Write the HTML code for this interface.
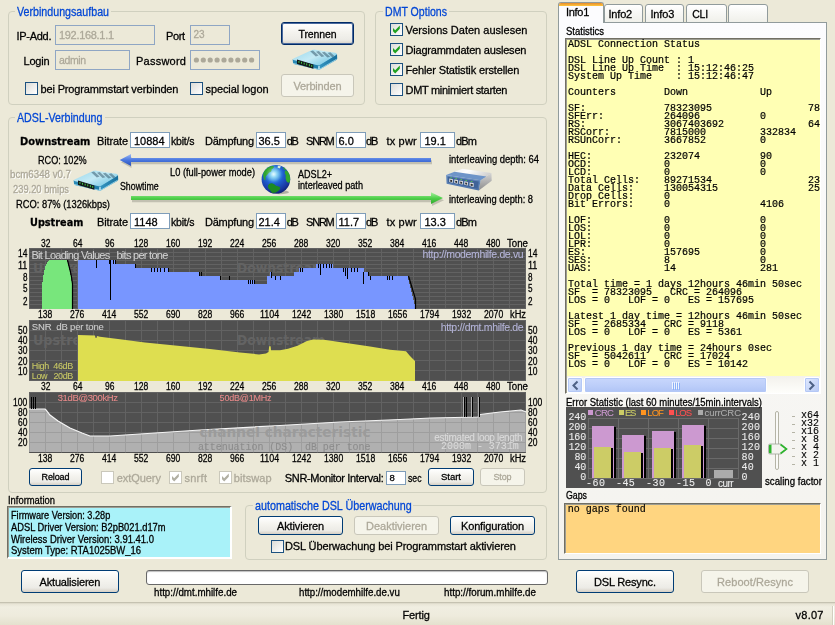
<!DOCTYPE html>
<html lang="de">
<head>
<meta charset="utf-8">
<title>DMT</title>
<style>
html,body{margin:0;padding:0;}
body{width:835px;height:625px;overflow:hidden;background:#ECE9D8;}
#app{position:relative;width:835px;height:625px;overflow:hidden;background:#ECE9D8;font-family:"Liberation Sans",sans-serif;}
#txt{position:absolute;left:0;top:0;width:835px;height:625px;will-change:transform;}
.t{position:absolute;white-space:pre;-webkit-text-stroke:0.28px;}
.a{position:absolute;box-sizing:border-box;}
.grp{position:absolute;box-sizing:border-box;border:1px solid #D0D0BF;border-radius:4px;}
.inp{position:absolute;box-sizing:border-box;border:1px solid #7F9DB9;background:#fff;}
.inp.dis{background:#ECE9D8;border-color:#8FA6C4;}
.btn{position:absolute;box-sizing:border-box;border:1px solid #003C74;border-radius:3px;background:linear-gradient(#FFFFFF 0%,#F4F3EE 45%,#ECEBE6 80%,#D6D0C5 100%);}
.btn.def{border-color:#002A66;box-shadow:inset 0 0 0 1px #4A6A9E;}
.btn.dis{border-color:#C9C7BA;background:#F5F4EA;}
.cb{position:absolute;box-sizing:border-box;width:13px;height:13px;border:1px solid #1C5180;background:linear-gradient(135deg,#DCDCD7,#FFFFFF);}
.cb.dis{border-color:#CAC8BB;background:#fff;}
.bg{position:absolute;background:#ECE9D8;}
</style>
</head>
<body>
<div id="app">
<div class="grp" style="left:8px;top:11px;width:357px;height:94px"></div>
<div class="bg" style="left:15px;top:9px;width:96px;height:5px"></div>
<div class="inp dis" style="left:55px;top:25px;width:100px;height:20px"></div>
<div class="inp dis" style="left:190px;top:25px;width:40px;height:20px"></div>
<div class="inp dis" style="left:55px;top:50px;width:75px;height:20px"></div>
<div class="inp dis" style="left:190px;top:50px;width:70px;height:20px"></div>
<svg class="a" style="left:192px;top:56px" width="66" height="8"><circle cx="4.4" cy="4" r="2.6" fill="#ACA899"/><circle cx="11.3" cy="4" r="2.6" fill="#ACA899"/><circle cx="18.2" cy="4" r="2.6" fill="#ACA899"/><circle cx="25.1" cy="4" r="2.6" fill="#ACA899"/><circle cx="32.0" cy="4" r="2.6" fill="#ACA899"/><circle cx="38.9" cy="4" r="2.6" fill="#ACA899"/><circle cx="45.8" cy="4" r="2.6" fill="#ACA899"/><circle cx="52.7" cy="4" r="2.6" fill="#ACA899"/><circle cx="59.6" cy="4" r="2.6" fill="#ACA899"/></svg>
<div class="cb " style="left:25px;top:82px"></div>
<div class="cb " style="left:190px;top:82px"></div>
<div class="btn def" style="left:281px;top:22px;width:73px;height:23px"></div>
<div class="btn dis" style="left:281px;top:74px;width:73px;height:23px"></div>
<div class="grp" style="left:375px;top:11px;width:172px;height:94px"></div>
<div class="bg" style="left:382.5px;top:9px;width:66px;height:5px"></div>
<div class="cb " style="left:390px;top:23px"><svg width="11" height="11" viewBox="0 0 11 11" style="position:absolute;left:0;top:0"><path d="M2 4 L4.2 6.2 L8.8 1.6 L8.8 4.8 L4.2 9.4 L2 7.2 Z" fill="#21A121"/></svg></div>
<div class="cb " style="left:390px;top:43px"><svg width="11" height="11" viewBox="0 0 11 11" style="position:absolute;left:0;top:0"><path d="M2 4 L4.2 6.2 L8.8 1.6 L8.8 4.8 L4.2 9.4 L2 7.2 Z" fill="#21A121"/></svg></div>
<div class="cb " style="left:390px;top:63px"><svg width="11" height="11" viewBox="0 0 11 11" style="position:absolute;left:0;top:0"><path d="M2 4 L4.2 6.2 L8.8 1.6 L8.8 4.8 L4.2 9.4 L2 7.2 Z" fill="#21A121"/></svg></div>
<div class="cb " style="left:390px;top:83px"></div>
<div class="grp" style="left:8px;top:117px;width:539px;height:376px"></div>
<div class="bg" style="left:15px;top:115px;width:89.5px;height:5px"></div>
<div class="inp " style="left:130px;top:132px;width:40px;height:16px"></div>
<div class="inp " style="left:256px;top:132px;width:30px;height:16px"></div>
<div class="inp " style="left:335.5px;top:132px;width:30px;height:16px"></div>
<div class="inp " style="left:420px;top:132px;width:35px;height:16px"></div>
<div class="inp " style="left:130px;top:213px;width:40px;height:16px"></div>
<div class="inp " style="left:256px;top:213px;width:30px;height:16px"></div>
<div class="inp " style="left:335.5px;top:213px;width:30px;height:16px"></div>
<div class="inp " style="left:420px;top:213px;width:35px;height:16px"></div>
<svg class="a" style="left:115px;top:150px" width="335" height="56" viewBox="115 150 335 56">
<defs>
<linearGradient id="gb" x1="0" y1="0" x2="0" y2="1"><stop offset="0" stop-color="#9DB8F2"/><stop offset="0.5" stop-color="#4A78E0"/><stop offset="1" stop-color="#2A50B8"/></linearGradient>
<linearGradient id="gg" x1="0" y1="0" x2="0" y2="1"><stop offset="0" stop-color="#A8F0A0"/><stop offset="0.5" stop-color="#4FD04A"/><stop offset="1" stop-color="#2FA82C"/></linearGradient>
</defs>
<g opacity="0.28" fill="#5A5A50"><path d="M121 162.3 L131.5 157 L131.5 160.3 L432 160.3 L432 164.3 L131.5 164.3 L131.5 168 Z"/><path d="M132 198.2 L432 198.2 L432 195 L444 200.2 L432 206 L432 202.2 L132 202.2 Z"/></g>
<path d="M119.7 160 L131 154 L131 158 L431 158 L431 162 L131 162 L131 166 Z" fill="url(#gb)"/>
<path d="M131 196 L431 196 L431 192.3 L443 198 L431 204 L431 200 L131 200 Z" fill="url(#gg)"/>
</svg>
<svg class="a" style="left:0;top:240px" width="560" height="75" viewBox="0 240 560 75" shape-rendering="crispEdges"><rect x="29" y="248" width="497" height="61" fill="#505050"/><rect x="29" y="248" width="1" height="61" fill="#626262"/><rect x="45" y="248" width="1" height="61" fill="#626262"/><rect x="61" y="248" width="1" height="61" fill="#626262"/><rect x="77" y="248" width="1" height="61" fill="#626262"/><rect x="93" y="248" width="1" height="61" fill="#626262"/><rect x="109" y="248" width="1" height="61" fill="#626262"/><rect x="125" y="248" width="1" height="61" fill="#626262"/><rect x="141" y="248" width="1" height="61" fill="#626262"/><rect x="157" y="248" width="1" height="61" fill="#626262"/><rect x="173" y="248" width="1" height="61" fill="#626262"/><rect x="189" y="248" width="1" height="61" fill="#626262"/><rect x="205" y="248" width="1" height="61" fill="#626262"/><rect x="221" y="248" width="1" height="61" fill="#626262"/><rect x="237" y="248" width="1" height="61" fill="#626262"/><rect x="253" y="248" width="1" height="61" fill="#626262"/><rect x="269" y="248" width="1" height="61" fill="#626262"/><rect x="285" y="248" width="1" height="61" fill="#626262"/><rect x="301" y="248" width="1" height="61" fill="#626262"/><rect x="317" y="248" width="1" height="61" fill="#626262"/><rect x="333" y="248" width="1" height="61" fill="#626262"/><rect x="349" y="248" width="1" height="61" fill="#626262"/><rect x="365" y="248" width="1" height="61" fill="#626262"/><rect x="381" y="248" width="1" height="61" fill="#626262"/><rect x="397" y="248" width="1" height="61" fill="#626262"/><rect x="413" y="248" width="1" height="61" fill="#626262"/><rect x="429" y="248" width="1" height="61" fill="#626262"/><rect x="445" y="248" width="1" height="61" fill="#626262"/><rect x="461" y="248" width="1" height="61" fill="#626262"/><rect x="477" y="248" width="1" height="61" fill="#626262"/><rect x="493" y="248" width="1" height="61" fill="#626262"/><rect x="509" y="248" width="1" height="61" fill="#626262"/><rect x="525" y="248" width="1" height="61" fill="#626262"/><rect x="29" y="248" width="496" height="1" fill="#626262"/><rect x="29" y="252" width="496" height="1" fill="#626262"/><rect x="29" y="256" width="496" height="1" fill="#626262"/><rect x="29" y="260" width="496" height="1" fill="#626262"/><rect x="29" y="264" width="496" height="1" fill="#626262"/><rect x="29" y="268" width="496" height="1" fill="#626262"/><rect x="29" y="272" width="496" height="1" fill="#626262"/><rect x="29" y="276" width="496" height="1" fill="#626262"/><rect x="29" y="280" width="496" height="1" fill="#626262"/><rect x="29" y="284" width="496" height="1" fill="#626262"/><rect x="29" y="288" width="496" height="1" fill="#626262"/><rect x="29" y="292" width="496" height="1" fill="#626262"/><rect x="29" y="296" width="496" height="1" fill="#626262"/><rect x="29" y="300" width="496" height="1" fill="#626262"/><rect x="29" y="304" width="496" height="1" fill="#626262"/><rect x="29" y="308" width="496" height="1" fill="#626262"/><text x="33" y="273" font-family="DejaVu Sans, sans-serif" font-weight="bold" font-size="14.5" fill="#636363" textLength="70" lengthAdjust="spacingAndGlyphs" shape-rendering="auto">Upstream</text><text x="237" y="273" font-family="DejaVu Sans, sans-serif" font-weight="bold" font-size="14.5" fill="#636363" textLength="88" lengthAdjust="spacingAndGlyphs" shape-rendering="auto">Downstream</text><path d="M42 309 L42 286 L43 278 L44 272 L45 268 L46 265 L47 263 L48 261 L49 260 L67 260 L68 264 L69 268 L70 272 L71 277 L72 284 L73 309 Z" fill="#78E67C"/><path d="M67.5 260 L68.5 264 L69.5 268 L70.5 272 L71.5 277 L72.5 284 L72.5 309" fill="none" stroke="#000" stroke-width="1.2" shape-rendering="auto"/><path d="M78 309 L78 260 L116 260 L116 264 L136 264 L136 268 L169 268 L169 272 L200 272 L200 276 L221 276 L221 280 L255 280 L255 284 L267 284 L267 276 L270 276 L270 272 L272 272 L272 276 L294 276 L294 272 L299 272 L299 268 L316 268 L316 264 L333 264 L333 268 L364 268 L364 272 L369 272 L369 276 L408 276 L408 280 L409 280 L409 284 L410 284 L410 288 L411 288 L411 292 L412 292 L412 296 L413 296 L413 300 L414 300 L414 304 L416 304 L416 309 Z" fill="#7896FF"/><rect x="96" y="260" width="1" height="8" fill="#000"/><rect x="109" y="260" width="1" height="4" fill="#000"/><rect x="110" y="260" width="1" height="40" fill="#000"/><rect x="113" y="260" width="1" height="4" fill="#000"/><rect x="115" y="260" width="1" height="4" fill="#000"/><rect x="135" y="264" width="1" height="4" fill="#000"/><rect x="151" y="268" width="1" height="4" fill="#000"/><rect x="154" y="268" width="1" height="4" fill="#000"/><rect x="157" y="268" width="1" height="4" fill="#000"/><rect x="160" y="268" width="1" height="4" fill="#000"/><rect x="164" y="268" width="1" height="4" fill="#000"/><rect x="168" y="268" width="1" height="4" fill="#000"/><rect x="199" y="272" width="1" height="4" fill="#000"/><rect x="201" y="272" width="1" height="4" fill="#000"/><rect x="220" y="276" width="1" height="4" fill="#000"/><rect x="229" y="276" width="1" height="4" fill="#000"/><rect x="248" y="280" width="1" height="4" fill="#000"/><rect x="250" y="280" width="1" height="4" fill="#000"/><rect x="252" y="280" width="1" height="4" fill="#000"/><rect x="254" y="280" width="1" height="4" fill="#000"/><rect x="271" y="272" width="1" height="6" fill="#000"/><rect x="275" y="276" width="1" height="4" fill="#000"/><rect x="280" y="276" width="1" height="4" fill="#000"/><rect x="300" y="268" width="1" height="4" fill="#000"/><rect x="302" y="268" width="1" height="4" fill="#000"/><rect x="318" y="264" width="1" height="4" fill="#000"/><rect x="320" y="264" width="1" height="11" fill="#000"/><rect x="323" y="264" width="1" height="4" fill="#000"/><rect x="326" y="264" width="1" height="4" fill="#000"/><rect x="329" y="264" width="1" height="4" fill="#000"/><rect x="331" y="264" width="1" height="4" fill="#000"/><rect x="343" y="268" width="1" height="4" fill="#000"/><rect x="345" y="268" width="1" height="8" fill="#000"/><rect x="347" y="268" width="1" height="11" fill="#000"/><rect x="351" y="268" width="1" height="4" fill="#000"/><rect x="354" y="268" width="1" height="4" fill="#000"/><rect x="357" y="268" width="1" height="4" fill="#000"/><rect x="363" y="272" width="1" height="12" fill="#000"/><rect x="368" y="272" width="1" height="4" fill="#000"/><rect x="370" y="276" width="1" height="4" fill="#000"/><rect x="387" y="276" width="1" height="4" fill="#000"/><rect x="389" y="276" width="1" height="4" fill="#000"/><rect x="392" y="276" width="1" height="4" fill="#000"/><path d="M408.5 276 L415.5 299 L415.5 309" fill="none" stroke="#000" stroke-width="1.2" shape-rendering="auto"/></svg>
<svg class="a" style="left:0;top:316px" width="560" height="70" viewBox="0 316 560 70" shape-rendering="crispEdges"><rect x="29" y="320" width="497" height="61" fill="#505050"/><rect x="29" y="320" width="1" height="61" fill="#626262"/><rect x="45" y="320" width="1" height="61" fill="#626262"/><rect x="61" y="320" width="1" height="61" fill="#626262"/><rect x="77" y="320" width="1" height="61" fill="#626262"/><rect x="93" y="320" width="1" height="61" fill="#626262"/><rect x="109" y="320" width="1" height="61" fill="#626262"/><rect x="125" y="320" width="1" height="61" fill="#626262"/><rect x="141" y="320" width="1" height="61" fill="#626262"/><rect x="157" y="320" width="1" height="61" fill="#626262"/><rect x="173" y="320" width="1" height="61" fill="#626262"/><rect x="189" y="320" width="1" height="61" fill="#626262"/><rect x="205" y="320" width="1" height="61" fill="#626262"/><rect x="221" y="320" width="1" height="61" fill="#626262"/><rect x="237" y="320" width="1" height="61" fill="#626262"/><rect x="253" y="320" width="1" height="61" fill="#626262"/><rect x="269" y="320" width="1" height="61" fill="#626262"/><rect x="285" y="320" width="1" height="61" fill="#626262"/><rect x="301" y="320" width="1" height="61" fill="#626262"/><rect x="317" y="320" width="1" height="61" fill="#626262"/><rect x="333" y="320" width="1" height="61" fill="#626262"/><rect x="349" y="320" width="1" height="61" fill="#626262"/><rect x="365" y="320" width="1" height="61" fill="#626262"/><rect x="381" y="320" width="1" height="61" fill="#626262"/><rect x="397" y="320" width="1" height="61" fill="#626262"/><rect x="413" y="320" width="1" height="61" fill="#626262"/><rect x="429" y="320" width="1" height="61" fill="#626262"/><rect x="445" y="320" width="1" height="61" fill="#626262"/><rect x="461" y="320" width="1" height="61" fill="#626262"/><rect x="477" y="320" width="1" height="61" fill="#626262"/><rect x="493" y="320" width="1" height="61" fill="#626262"/><rect x="509" y="320" width="1" height="61" fill="#626262"/><rect x="525" y="320" width="1" height="61" fill="#626262"/><rect x="29" y="320" width="496" height="1" fill="#626262"/><rect x="29" y="330" width="496" height="1" fill="#626262"/><rect x="29" y="340" width="496" height="1" fill="#626262"/><rect x="29" y="350" width="496" height="1" fill="#626262"/><rect x="29" y="360" width="496" height="1" fill="#626262"/><rect x="29" y="370" width="496" height="1" fill="#626262"/><rect x="29" y="380" width="496" height="1" fill="#626262"/><text x="33" y="345" font-family="DejaVu Sans, sans-serif" font-weight="bold" font-size="14.5" fill="#636363" textLength="70" lengthAdjust="spacingAndGlyphs" shape-rendering="auto">Upstream</text><text x="237" y="345" font-family="DejaVu Sans, sans-serif" font-weight="bold" font-size="14.5" fill="#636363" textLength="88" lengthAdjust="spacingAndGlyphs" shape-rendering="auto">Downstream</text><path d="M78 381 L78 335 L95 335.5 L95.5 338 L96.5 338 L97 336 L100 336.8 L120 339.3 L145 342.4 L180 346 L210 349 L240 352.5 L259 354.4 L266 353.5 L268.5 352 L269.2 346.3 L270.6 346.3 L271 350.3 L280 350.3 L288 348.7 L297.5 345.8 L307 341 L313 339.6 L324 339.8 L348 343.2 L370 346.5 L390 349.8 L406 351.3 L410 356 L415 361 L415 381 Z" fill="#DEDE50" shape-rendering="auto"/></svg>
<svg class="a" style="left:0;top:388px" width="560" height="68" viewBox="0 388 560 68" shape-rendering="crispEdges"><rect x="29" y="392" width="497" height="61" fill="#505050"/><rect x="29" y="392" width="1" height="61" fill="#626262"/><rect x="45" y="392" width="1" height="61" fill="#626262"/><rect x="61" y="392" width="1" height="61" fill="#626262"/><rect x="77" y="392" width="1" height="61" fill="#626262"/><rect x="93" y="392" width="1" height="61" fill="#626262"/><rect x="109" y="392" width="1" height="61" fill="#626262"/><rect x="125" y="392" width="1" height="61" fill="#626262"/><rect x="141" y="392" width="1" height="61" fill="#626262"/><rect x="157" y="392" width="1" height="61" fill="#626262"/><rect x="173" y="392" width="1" height="61" fill="#626262"/><rect x="189" y="392" width="1" height="61" fill="#626262"/><rect x="205" y="392" width="1" height="61" fill="#626262"/><rect x="221" y="392" width="1" height="61" fill="#626262"/><rect x="237" y="392" width="1" height="61" fill="#626262"/><rect x="253" y="392" width="1" height="61" fill="#626262"/><rect x="269" y="392" width="1" height="61" fill="#626262"/><rect x="285" y="392" width="1" height="61" fill="#626262"/><rect x="301" y="392" width="1" height="61" fill="#626262"/><rect x="317" y="392" width="1" height="61" fill="#626262"/><rect x="333" y="392" width="1" height="61" fill="#626262"/><rect x="349" y="392" width="1" height="61" fill="#626262"/><rect x="365" y="392" width="1" height="61" fill="#626262"/><rect x="381" y="392" width="1" height="61" fill="#626262"/><rect x="397" y="392" width="1" height="61" fill="#626262"/><rect x="413" y="392" width="1" height="61" fill="#626262"/><rect x="429" y="392" width="1" height="61" fill="#626262"/><rect x="445" y="392" width="1" height="61" fill="#626262"/><rect x="461" y="392" width="1" height="61" fill="#626262"/><rect x="477" y="392" width="1" height="61" fill="#626262"/><rect x="493" y="392" width="1" height="61" fill="#626262"/><rect x="509" y="392" width="1" height="61" fill="#626262"/><rect x="525" y="392" width="1" height="61" fill="#626262"/><rect x="29" y="392" width="496" height="1" fill="#626262"/><rect x="29" y="402" width="496" height="1" fill="#626262"/><rect x="29" y="412" width="496" height="1" fill="#626262"/><rect x="29" y="422" width="496" height="1" fill="#626262"/><rect x="29" y="432" width="496" height="1" fill="#626262"/><rect x="29" y="442" width="496" height="1" fill="#626262"/><clipPath id="c3c"><path d="M29 452 L29 409 L45 409 L46 410 L50 415 L58 421 L70 428 L82 433 L90 436 L110 436 L140 434 L200 430 L280 425.5 L340 422 L400 419.5 L431 418 L478 417 L480 414.5 L500 412 L521 410 L525 411.5 L526 412 L526 452 Z"/></clipPath><path d="M29 452 L29 409 L45 409 L46 410 L50 415 L58 421 L70 428 L82 433 L90 436 L110 436 L140 434 L200 430 L280 425.5 L340 422 L400 419.5 L431 418 L478 417 L480 414.5 L500 412 L521 410 L525 411.5 L526 412 L526 452 Z" fill="#B0B0B0" shape-rendering="auto"/><g clip-path="url(#c3c)"><rect x="29" y="392" width="1" height="61" fill="#9E9E9E"/><rect x="45" y="392" width="1" height="61" fill="#9E9E9E"/><rect x="61" y="392" width="1" height="61" fill="#9E9E9E"/><rect x="77" y="392" width="1" height="61" fill="#9E9E9E"/><rect x="93" y="392" width="1" height="61" fill="#9E9E9E"/><rect x="109" y="392" width="1" height="61" fill="#9E9E9E"/><rect x="125" y="392" width="1" height="61" fill="#9E9E9E"/><rect x="141" y="392" width="1" height="61" fill="#9E9E9E"/><rect x="157" y="392" width="1" height="61" fill="#9E9E9E"/><rect x="173" y="392" width="1" height="61" fill="#9E9E9E"/><rect x="189" y="392" width="1" height="61" fill="#9E9E9E"/><rect x="205" y="392" width="1" height="61" fill="#9E9E9E"/><rect x="221" y="392" width="1" height="61" fill="#9E9E9E"/><rect x="237" y="392" width="1" height="61" fill="#9E9E9E"/><rect x="253" y="392" width="1" height="61" fill="#9E9E9E"/><rect x="269" y="392" width="1" height="61" fill="#9E9E9E"/><rect x="285" y="392" width="1" height="61" fill="#9E9E9E"/><rect x="301" y="392" width="1" height="61" fill="#9E9E9E"/><rect x="317" y="392" width="1" height="61" fill="#9E9E9E"/><rect x="333" y="392" width="1" height="61" fill="#9E9E9E"/><rect x="349" y="392" width="1" height="61" fill="#9E9E9E"/><rect x="365" y="392" width="1" height="61" fill="#9E9E9E"/><rect x="381" y="392" width="1" height="61" fill="#9E9E9E"/><rect x="397" y="392" width="1" height="61" fill="#9E9E9E"/><rect x="413" y="392" width="1" height="61" fill="#9E9E9E"/><rect x="429" y="392" width="1" height="61" fill="#9E9E9E"/><rect x="445" y="392" width="1" height="61" fill="#9E9E9E"/><rect x="461" y="392" width="1" height="61" fill="#9E9E9E"/><rect x="477" y="392" width="1" height="61" fill="#9E9E9E"/><rect x="493" y="392" width="1" height="61" fill="#9E9E9E"/><rect x="509" y="392" width="1" height="61" fill="#9E9E9E"/><rect x="525" y="392" width="1" height="61" fill="#9E9E9E"/><rect x="29" y="402" width="496" height="1" fill="#9E9E9E"/><rect x="29" y="412" width="496" height="1" fill="#9E9E9E"/><rect x="29" y="422" width="496" height="1" fill="#9E9E9E"/><rect x="29" y="432" width="496" height="1" fill="#9E9E9E"/><rect x="29" y="442" width="496" height="1" fill="#9E9E9E"/></g><path d="M29 409 L45 409 L46 410 L50 415 L58 421 L70 428 L82 433 L90 436 L110 436 L140 434 L200 430 L280 425.5 L340 422 L400 419.5 L431 418 L478 417 L480 414.5 L500 412 L521 410 L525 411.5 L526 412" fill="none" stroke="#F4F4F4" stroke-width="1.2" shape-rendering="auto"/><rect x="31" y="397" width="1" height="12" fill="#000"/><rect x="33" y="397" width="1" height="12" fill="#000"/><rect x="35" y="397" width="1" height="12" fill="#000"/><rect x="464" y="397" width="1" height="20" fill="#000"/><rect x="466" y="397" width="1" height="20" fill="#000"/><rect x="472" y="397" width="1" height="20" fill="#000"/><rect x="479" y="397" width="1" height="20" fill="#000"/><rect x="463" y="397" width="1" height="20" fill="#B0B0B0"/><rect x="471" y="397" width="1" height="20" fill="#B0B0B0"/><rect x="478" y="397" width="1" height="20" fill="#B0B0B0"/><g clip-path="url(#c3c)"><text x="199.5" y="437" font-family="DejaVu Sans, sans-serif" font-weight="bold" font-size="14.5" fill="#9B9B9B" textLength="171" lengthAdjust="spacingAndGlyphs" shape-rendering="auto">channel characteristic</text></g></svg>
<div class="btn " style="left:29px;top:468px;width:53px;height:18px"></div>
<div class="cb dis" style="left:101px;top:471px"></div>
<div class="cb dis" style="left:169px;top:471px"><svg width="11" height="11" viewBox="0 0 11 11" style="position:absolute;left:0;top:0"><path d="M2 4 L4.2 6.2 L8.8 1.6 L8.8 4.8 L4.2 9.4 L2 7.2 Z" fill="#B1AFA2"/></svg></div>
<div class="cb dis" style="left:218.6px;top:471px"><svg width="11" height="11" viewBox="0 0 11 11" style="position:absolute;left:0;top:0"><path d="M2 4 L4.2 6.2 L8.8 1.6 L8.8 4.8 L4.2 9.4 L2 7.2 Z" fill="#B1AFA2"/></svg></div>
<div class="inp " style="left:386px;top:471px;width:20px;height:14px"></div>
<div class="btn " style="left:428px;top:468px;width:46px;height:18px"></div>
<div class="btn dis" style="left:480px;top:468px;width:45px;height:18px"></div>
<div class="a" style="left:7px;top:506px;width:225px;height:53px;background:#A9F2F9;border:1px solid;border-width:1px 2px 2px 1px;border-color:#716F64 #FFFFFF #FFFFFF #716F64;box-shadow:inset 1px 1px 0 #9D9D92"></div>
<div class="grp" style="left:245px;top:505px;width:302px;height:55px"></div>
<div class="bg" style="left:252.6px;top:503px;width:160.7px;height:5px"></div>
<div class="btn " style="left:258px;top:516px;width:85px;height:19px"></div>
<div class="btn dis" style="left:354px;top:516px;width:85px;height:19px"></div>
<div class="btn " style="left:450px;top:516px;width:85px;height:19px"></div>
<div class="cb " style="left:271px;top:540px"></div>
<div class="btn " style="left:21px;top:570px;width:98px;height:23px"></div>
<div class="a" style="left:146px;top:570px;width:402px;height:15px;background:#fff;border:1px solid #686868;border-radius:3px;box-shadow:inset 0 1px 1px #BEBEBE"></div>
<div class="btn " style="left:576px;top:570px;width:98px;height:23px"></div>
<div class="btn dis" style="left:701px;top:570px;width:108px;height:23px"></div>
<div class="a" style="left:0;top:602px;width:835px;height:23px;background:linear-gradient(#B5B2A0 0,#D5D2C2 1px,#E8E5D6 2px,#F0EEE1 5px,#EEEBDD 60%,#E4E1CE 100%)"></div>
<div class="a" style="left:832px;top:606px;width:1px;height:19px;background:#D2CFBF"></div><div class="a" style="left:833px;top:606px;width:1px;height:19px;background:#FFFFFF"></div>
<div class="a" style="left:558px;top:22px;width:269px;height:538px;background:linear-gradient(#FCFCFE,#F4F3EE);border:1px solid #919B9C"></div>
<div class="a" style="left:604px;top:4px;width:39px;height:19px;background:linear-gradient(#FFFFFF,#F0F0EA);border:1px solid #919B9C;border-radius:3px 3px 0 0"></div>
<div class="a" style="left:645px;top:4px;width:39px;height:19px;background:linear-gradient(#FFFFFF,#F0F0EA);border:1px solid #919B9C;border-radius:3px 3px 0 0"></div>
<div class="a" style="left:686px;top:4px;width:41px;height:19px;background:linear-gradient(#FFFFFF,#F0F0EA);border:1px solid #919B9C;border-radius:3px 3px 0 0"></div>
<div class="a" style="left:728px;top:4px;width:40px;height:19px;background:linear-gradient(#FFFFFF,#F0F0EA);border:1px solid #919B9C;border-radius:3px 3px 0 0"></div>
<div class="a" style="left:558px;top:2px;width:46px;height:21px;background:#FCFCFE;border:1px solid #919B9C;border-bottom:none;border-radius:3px 3px 0 0;overflow:hidden"><div style="height:3px;background:linear-gradient(#E68B2C,#FFC73C)"></div></div>
<div class="a" style="left:565px;top:38px;width:256px;height:356px;background:#FFFFB4;border:1px solid;border-color:#716F64 #FFFFFF #FFFFFF #716F64;box-shadow:inset 1px 1px 0 #9D9D92"></div>
<pre class="a" style="left:567.8px;top:39px;width:252px;height:336px;padding-top:2px;margin:0;overflow:hidden;will-change:transform;font:10px/8px 'Liberation Mono',monospace;color:#000;-webkit-text-stroke:0.2px;">ADSL Connection Status

DSL Line Up Count : 1
DSL Line Up Time  : 15:12:46:25
System Up Time    : 15:12:46:47

Counters        Down            Up

SF:             78323095                78
SFErr:          264096          0
RS:             3067403692              64
RSCorr:         7815000         332834
RSUnCorr:       3667852         0

HEC:            232074          90
OCD:            0               0
LCD:            0               0
Total Cells:    89271534                23
Data Cells:     130054315               25
Drop Cells:     0
Bit Errors:     0               4106

LOF:            0               0
LOS:            0               0
LOL:            0               0
LPR:            0               0
ES:             157695          0
SES:            8               0
UAS:            14              281

Total time = 1 days 12hours 46min 50sec
SF  = 78323095   CRC = 264096
LOS = 0   LOF = 0   ES = 157695

Latest 1 day time = 12hours 46min 50sec
SF  = 2685334   CRC = 9118
LOS = 0   LOF = 0   ES = 5361

Previous 1 day time = 24hours 0sec
SF  = 5042611   CRC = 17024
LOS = 0   LOF = 0   ES = 10142</pre>
<div class="a" style="left:567px;top:376px;width:253px;height:17px;background:linear-gradient(#F3F1EC,#FEFEFB)"></div>
<div class="a" style="left:567px;top:377px;width:16px;height:16px;border:1px solid #FFFFFF;border-radius:2px;background:linear-gradient(135deg,#E1EAFE,#B7CAF5);box-shadow:0 0 0 1px #B4C8F6 inset"></div>
<div class="a" style="left:804px;top:377px;width:16px;height:16px;border:1px solid #FFFFFF;border-radius:2px;background:linear-gradient(135deg,#E1EAFE,#B7CAF5);box-shadow:0 0 0 1px #B4C8F6 inset"></div>
<div class="a" style="left:584px;top:377px;width:183px;height:16px;border:1px solid #FFFFFF;border-radius:2px;background:linear-gradient(#C9D7FC,#BBCDF9 60%,#B0C4F5);box-shadow:0 0 0 1px #B4C8F6 inset"></div>
<svg class="a" style="left:568px;top:377.5px" width="252" height="15"><path d="M9.5 3.5 L5.5 7.5 L9.5 11.5" fill="none" stroke="#4D6185" stroke-width="2"/><path d="M241.5 3.5 L245.5 7.5 L241.5 11.5" fill="none" stroke="#4D6185" stroke-width="2"/>
<g stroke="#EEF4FE" stroke-width="1"><path d="M104.5 4v7M106.5 4v7M108.5 4v7M110.5 4v7"/></g><g stroke="#8CB0F8" stroke-width="1"><path d="M105.5 5v7M107.5 5v7M109.5 5v7M111.5 5v7"/></g></svg>
<div class="a" style="left:564px;top:502.5px;width:257px;height:51px;background:#FFD580;border:1px solid;border-color:#716F64 #FFFFFF #FFFFFF #716F64;box-shadow:inset 1px 1px 0 #9D9D92"></div>
<svg class="a" style="left:566px;top:407px" width="196" height="81" viewBox="566 407 196 81" shape-rendering="crispEdges"><rect x="566" y="407" width="196" height="81" fill="#505050"/><rect x="588" y="418" width="1" height="61" fill="#6A6A6A"/><rect x="618" y="418" width="1" height="61" fill="#6A6A6A"/><rect x="648" y="418" width="1" height="61" fill="#6A6A6A"/><rect x="678" y="418" width="1" height="61" fill="#6A6A6A"/><rect x="708" y="418" width="1" height="61" fill="#6A6A6A"/><rect x="738" y="418" width="1" height="61" fill="#6A6A6A"/><rect x="588" y="418" width="151" height="1" fill="#6A6A6A"/><rect x="588" y="428" width="151" height="1" fill="#6A6A6A"/><rect x="588" y="438" width="151" height="1" fill="#6A6A6A"/><rect x="588" y="448" width="151" height="1" fill="#6A6A6A"/><rect x="588" y="458" width="151" height="1" fill="#6A6A6A"/><rect x="588" y="468" width="151" height="1" fill="#6A6A6A"/><rect x="588" y="478" width="151" height="1" fill="#6A6A6A"/><rect x="593" y="427" width="23" height="51" fill="#000"/><rect x="592" y="426" width="22" height="52" fill="#CC99D0"/><rect x="595" y="448" width="18" height="30" fill="#000"/><rect x="594" y="447" width="17" height="31" fill="#CCCC66"/><rect x="623" y="436" width="23" height="42" fill="#000"/><rect x="622" y="435" width="22" height="43" fill="#CC99D0"/><rect x="625" y="453" width="18" height="25" fill="#000"/><rect x="624" y="452" width="17" height="26" fill="#CCCC66"/><rect x="653" y="432" width="23" height="46" fill="#000"/><rect x="652" y="431" width="22" height="47" fill="#CC99D0"/><rect x="655" y="449" width="18" height="29" fill="#000"/><rect x="654" y="448" width="17" height="30" fill="#CCCC66"/><rect x="683" y="426" width="23" height="52" fill="#000"/><rect x="682" y="425" width="22" height="53" fill="#CC99D0"/><rect x="685" y="446" width="18" height="32" fill="#000"/><rect x="684" y="445" width="17" height="33" fill="#CCCC66"/><rect x="714" y="470" width="19" height="8" fill="#ABABAB"/><rect x="588.3" y="410" width="5" height="5" fill="#CC99D0"/><rect x="619.2" y="410" width="5" height="5" fill="#CCCC66"/><rect x="641" y="410" width="5" height="5" fill="#FF9420"/><rect x="669" y="410" width="5" height="5" fill="#FF5050"/><rect x="698" y="410" width="5" height="5" fill="#ABABAB"/></svg>
<svg class="a" style="left:764px;top:408px" width="36" height="66" viewBox="764 408 36 66">
<rect x="775.5" y="411.5" width="3" height="58" rx="1.5" fill="#FAFAF7" stroke="#B5B4A6"/>
<path d="M770 444 L781 444 L787 449 L781 454 L770 454 Q768.5 454 768.5 452.5 L768.5 445.5 Q768.5 444 770 444Z" fill="#F4F3EE" stroke="#9FA49A" stroke-width="0.8"/>
<path d="M769 445 L771.5 444.5 L771.5 453.5 L769 453 Z" fill="#2CB52C"/>
<path d="M780.5 444.5 L786.5 449 L780.5 453.5" fill="none" stroke="#2CB52C" stroke-width="1.6"/>
<rect x="792" y="416" width="3" height="1" fill="#B5B4A6"/><rect x="792" y="424" width="3" height="1" fill="#B5B4A6"/><rect x="792" y="432" width="3" height="1" fill="#B5B4A6"/><rect x="792" y="440" width="3" height="1" fill="#B5B4A6"/><rect x="792" y="448" width="3" height="1" fill="#B5B4A6"/><rect x="792" y="456" width="3" height="1" fill="#B5B4A6"/><rect x="792" y="464" width="3" height="1" fill="#B5B4A6"/></svg>
<svg width="0" height="0" style="position:absolute"><defs>
<linearGradient id="rt" x1="0.1" y1="0.2" x2="1" y2="0.9"><stop offset="0" stop-color="#A5DDEE"/><stop offset="0.4" stop-color="#C4EAF5"/><stop offset="0.75" stop-color="#8ED2E9"/><stop offset="1" stop-color="#4FB2D8"/></linearGradient>
<linearGradient id="rl" x1="0" y1="0" x2="0" y2="1"><stop offset="0" stop-color="#2F8FBA"/><stop offset="1" stop-color="#1A77A4"/></linearGradient>
<linearGradient id="rr" x1="0" y1="0" x2="1" y2="0"><stop offset="0" stop-color="#3798C4"/><stop offset="1" stop-color="#186F9C"/></linearGradient>
<radialGradient id="gl" cx="0.42" cy="0.32" r="0.75"><stop offset="0" stop-color="#BDF4FF"/><stop offset="0.15" stop-color="#55C0F0"/><stop offset="0.45" stop-color="#1F5FD0"/><stop offset="0.75" stop-color="#1A3AA5"/><stop offset="1" stop-color="#101F70"/></radialGradient>
<radialGradient id="gs" cx="0.42" cy="0.32" r="0.8"><stop offset="0" stop-color="#fff" stop-opacity="0.55"/><stop offset="0.35" stop-color="#fff" stop-opacity="0"/><stop offset="0.75" stop-color="#001060" stop-opacity="0"/><stop offset="1" stop-color="#001060" stop-opacity="0.55"/></radialGradient>
<linearGradient id="mt" x1="0" y1="0" x2="1" y2="0.3"><stop offset="0" stop-color="#E8E8E8"/><stop offset="0.5" stop-color="#FFFFFF"/><stop offset="1" stop-color="#D0D0D0"/></linearGradient>
<linearGradient id="ms" x1="0" y1="0" x2="0" y2="1"><stop offset="0" stop-color="#D4D4D4"/><stop offset="1" stop-color="#8C8C8C"/></linearGradient>
<linearGradient id="mf" x1="0" y1="0" x2="0" y2="1"><stop offset="0" stop-color="#6C92C6"/><stop offset="1" stop-color="#4A70A6"/></linearGradient>
<g id="router">
<clipPath id="rtc"><path d="M1.6 9.4 L20 1.1 Q21.6 0.4 23.4 0.7 L43.2 3.8 Q46 4.5 43.8 6.2 L28.6 15.6 Q27 16.6 25 16.1 L2.4 11.2 Q-0.2 10.4 1.6 9.4 Z"/></clipPath>
<path d="M0.6 10.2 L1 13.6 Q1.2 14.8 2.6 15.2 L26 20.6 L27.4 16 Z" fill="url(#rl)"/>
<path d="M27 15.8 L45 5 L45.2 9.4 Q45.2 10.2 44.2 10.9 L28.2 20.2 Q26.8 21 26 20.6 Z" fill="url(#rr)"/>
<path d="M1.6 9.4 L20 1.1 Q21.6 0.4 23.4 0.7 L43.2 3.8 Q46 4.5 43.8 6.2 L28.6 15.6 Q27 16.6 25 16.1 L2.4 11.2 Q-0.2 10.4 1.6 9.4 Z" fill="url(#rt)"/>
<path d="M1.2 14.4 L26 20.2 L28 20 L44.6 10.2" stroke="#A9E2F2" stroke-width="0.9" fill="none" opacity="0.85"/>
<path d="M27 16.8 L27 20.2" stroke="#D5F2FA" stroke-width="1.3" opacity="0.95"/>
<g clip-path="url(#rtc)" fill="#2E5064" opacity="0.5"><path d="M18.2 2.2 L21.0 1.5 L26.6 6.6 L23.8 7.4Z"/><path d="M24.0 2.8 L26.8 2.1 L32.4 7.2 L29.6 8.0Z"/><path d="M29.8 3.4 L32.6 2.7 L38.2 7.8 L35.4 8.6Z"/><path d="M35.6 4.0 L38.4 3.3 L44.0 8.4 L41.2 9.2Z"/></g>
<path d="M5 10.4 L21.4 15.4 L21.4 19.7 L5 14.9 Z" fill="#12181A"/>
<g fill="#48D64C"><rect x="6.5" y="12" width="0.9" height="1.9"/><rect x="9.1" y="12.8" width="0.9" height="1.9"/><rect x="11.7" y="13.6" width="0.9" height="1.9"/><rect x="14.3" y="14.4" width="0.9" height="1.9"/><rect x="16.9" y="15.2" width="0.9" height="2"/><rect x="19.3" y="15.9" width="0.9" height="2"/></g>
</g>
</defs></svg>
<svg class="a" style="left:73px;top:169.5px" width="47" height="22"><use href="#router"/></svg>
<svg class="a" style="left:292px;top:48.8px" width="47" height="22"><use href="#router"/></svg>
<svg class="a" style="left:259px;top:163px" width="36" height="34" viewBox="259 163 36 34">
<ellipse cx="280" cy="192.2" rx="9" ry="2" fill="#000" opacity="0.25"/>
<clipPath id="gc"><circle cx="275.9" cy="179.3" r="14.3"/></clipPath>
<circle cx="275.9" cy="179.3" r="14.3" fill="url(#gl)"/>
<g clip-path="url(#gc)" fill="#2FA62F">
<path d="M264 171 Q266.5 167.5 270.5 166.3 L273.5 166 Q274.5 167 273 168.5 L271.5 169.5 Q272 171 270.5 172 Q268.5 172.5 268 174 L266.5 175.5 Q265.3 176.5 265.5 178.5 Q266 180 265 180.5 Q263.5 179 263.2 176 Q263 173 264 171 Z"/>
<path d="M268 185.5 Q269 183 272 183.3 Q274.5 184.2 276 185.8 Q279 186.5 280.5 187.6 Q280 190 277.5 191.5 Q275 193.5 272 193 Q271 191 269.5 189.5 Q267.5 187.5 268 185.5Z" fill="#1C8A22"/>
<path d="M285 170.5 Q287.5 170 289 172.5 L290.5 176.5 Q291 180 289.5 182.6 Q287.5 183 286.3 181 Q285 178.5 285.8 175.5 Q284 173 285 170.5Z"/>
<path d="M282.5 167.3 Q285 167.6 286.8 169.6 L285.2 170 Q283.5 169.3 282.5 167.3Z"/>
<path d="M278 165.5 L281 166.5 L279.5 168.5 L277.5 167.5Z" fill="#D8F0E0"/>
</g>
<circle cx="275.9" cy="179.3" r="14.3" fill="url(#gs)"/>
</svg>
<svg class="a" style="left:445px;top:167px" width="49" height="26" viewBox="445 167 49 26">
<path d="M480.6 180.3 L491.4 173.1 L491.7 180.7 L478.8 190.6 Z" fill="url(#ms)"/>
<path d="M446.1 175 L462.3 168.8 L491.4 173.1 L480.6 180.3 Z" fill="url(#mt)"/>
<path d="M446.1 175 L454.5 171.8 L486.4 176.5 L480.6 180.3 Z" fill="#6E94C8"/>
<path d="M446.1 175 L480.6 180.3 L478.8 190.6 L446.6 183.8 Z" fill="url(#mf)"/>
<path d="M447.6 176.6 L478.8 181.6 L477.6 188.8 L447.9 182.6 Z" fill="#3F6398"/>
<g fill="#E4E4E4"><path d="M449.3 178.6 l3.6 0.6 l0 3.6 l-3.6 -0.7z"/><path d="M454.3 179.5 l3.6 0.6 l0 3.6 l-3.6 -0.7z"/><path d="M459.3 180.4 l3.6 0.6 l0 3.6 l-3.6 -0.7z"/><path d="M464.3 181.3 l3.6 0.6 l0 3.6 l-3.6 -0.7z"/><path d="M469.6 182.4 l4 0.7 l0 3.8 l-4 -0.8z"/></g>
<g fill="#30343A"><path d="M450.2 179.8 l1.9 0.3 l0 1.9 l-1.9 -0.35z"/><path d="M455.2 180.7 l1.9 0.3 l0 1.9 l-1.9 -0.35z"/><path d="M460.2 181.6 l1.9 0.3 l0 1.9 l-1.9 -0.35z"/><path d="M465.2 182.5 l1.9 0.3 l0 1.9 l-1.9 -0.35z"/><path d="M470.6 183.7 l2.1 0.35 l0 2 l-2.1 -0.4z"/></g>
<g fill="#58D048"><rect x="450.3" y="177.4" width="1.6" height="0.8"/><rect x="455.4" y="178.2" width="1.6" height="0.8"/><rect x="460.4" y="179.1" width="1.6" height="0.8"/><rect x="465.5" y="180" width="1.6" height="0.8"/><rect x="470.8" y="181" width="1.6" height="0.8"/></g>
</svg>
<div id="txt">
<span class="t" style='left:17.0px;top:4.0px;font:normal 12.5px/16px "Liberation Sans", sans-serif;color:#0046D5;transform:scaleX(0.854);transform-origin:0 50%;'>Verbindungsaufbau</span>
<span class="t" style='left:16.5px;top:29.0px;font:normal 11px/14px "Liberation Sans", sans-serif;color:#000;letter-spacing:-0.28px;'>IP-Add.</span>
<span class="t" style='left:59.0px;top:28.0px;font:normal 11px/14px "Liberation Sans", sans-serif;color:#ACA899;letter-spacing:-0.31px;'>192.168.1.1</span>
<span class="t" style='left:166.0px;top:29.0px;font:normal 11px/14px "Liberation Sans", sans-serif;color:#000;letter-spacing:-0.40px;'>Port</span>
<span class="t" style='left:193.5px;top:28.0px;font:normal 10px/14px "Liberation Sans", sans-serif;color:#ACA899;letter-spacing:-0.12px;'>23</span>
<span class="t" style='left:23.5px;top:54.0px;font:normal 11px/14px "Liberation Sans", sans-serif;color:#000;letter-spacing:-0.23px;'>Login</span>
<span class="t" style='left:59.0px;top:53.0px;font:normal 10.5px/14px "Liberation Sans", sans-serif;color:#ACA899;letter-spacing:-0.40px;'>admin</span>
<span class="t" style='left:136.0px;top:54.0px;font:normal 11px/14px "Liberation Sans", sans-serif;color:#000;letter-spacing:0.24px;'>Password</span>
<span class="t" style='left:40.5px;top:82.0px;font:normal 11px/14px "Liberation Sans", sans-serif;color:#000;letter-spacing:-0.15px;'>bei Programmstart verbinden</span>
<span class="t" style='left:205.5px;top:82.0px;font:normal 11px/14px "Liberation Sans", sans-serif;color:#000;letter-spacing:-0.10px;'>special logon</span>
<span class="t" style='left:298.5px;top:26.5px;font:normal 10.5px/14px "Liberation Sans", sans-serif;color:#000;letter-spacing:-0.12px;'>Trennen</span>
<span class="t" style='left:293.5px;top:78.5px;font:normal 11px/14px "Liberation Sans", sans-serif;color:#ACA899;letter-spacing:-0.19px;'>Verbinden</span>
<span class="t" style='left:384.5px;top:4.0px;font:normal 12.5px/16px "Liberation Sans", sans-serif;color:#0046D5;transform:scaleX(0.845);transform-origin:0 50%;'>DMT Options</span>
<span class="t" style='left:405.5px;top:23.0px;font:normal 11px/14px "Liberation Sans", sans-serif;color:#000;letter-spacing:0.01px;'>Versions Daten auslesen</span>
<span class="t" style='left:405.5px;top:43.0px;font:normal 11px/14px "Liberation Sans", sans-serif;color:#000;letter-spacing:-0.21px;'>Diagrammdaten auslesen</span>
<span class="t" style='left:405.5px;top:63.0px;font:normal 11px/14px "Liberation Sans", sans-serif;color:#000;letter-spacing:-0.14px;'>Fehler Statistik erstellen</span>
<span class="t" style='left:405.5px;top:83.0px;font:normal 11px/14px "Liberation Sans", sans-serif;color:#000;letter-spacing:-0.30px;'>DMT minimiert starten</span>
<span class="t" style='left:17.0px;top:110.0px;font:normal 12.5px/16px "Liberation Sans", sans-serif;color:#0046D5;transform:scaleX(0.854);transform-origin:0 50%;'>ADSL-Verbindung</span>
<span class="t" style='left:19.5px;top:134.7px;font:bold 11px/14px "DejaVu Sans", sans-serif;color:#000;transform:scaleX(0.900);transform-origin:0 50%;'>Downstream</span>
<span class="t" style='left:97.0px;top:134.0px;font:normal 11px/14px "Liberation Sans", sans-serif;color:#000;letter-spacing:-0.13px;'>Bitrate</span>
<span class="t" style='left:134.0px;top:133.5px;font:normal 11px/14px "Liberation Sans", sans-serif;color:#000;'>10884</span>
<span class="t" style='left:171.0px;top:134.0px;font:normal 10.5px/14px "Liberation Sans", sans-serif;color:#000;letter-spacing:-0.20px;'>kbit/s</span>
<span class="t" style='left:205.0px;top:134.0px;font:normal 11px/14px "Liberation Sans", sans-serif;color:#000;letter-spacing:-0.25px;'>Dämpfung</span>
<span class="t" style='left:258.5px;top:133.5px;font:normal 11px/14px "Liberation Sans", sans-serif;color:#000;'>36.5</span>
<span class="t" style='left:286.7px;top:134.0px;font:normal 11px/14px "Liberation Sans", sans-serif;color:#000;letter-spacing:-1.20px;'>dB</span>
<span class="t" style='left:306.0px;top:134.0px;font:normal 11px/14px "Liberation Sans", sans-serif;color:#000;letter-spacing:-1.20px;'>SNRM</span>
<span class="t" style='left:338.5px;top:133.5px;font:normal 11px/14px "Liberation Sans", sans-serif;color:#000;'>6.0</span>
<span class="t" style='left:366.0px;top:134.0px;font:normal 11px/14px "Liberation Sans", sans-serif;color:#000;letter-spacing:-1.17px;'>dB</span>
<span class="t" style='left:386.5px;top:134.0px;font:normal 11px/14px "Liberation Sans", sans-serif;color:#000;letter-spacing:0.17px;'>tx pwr</span>
<span class="t" style='left:424.5px;top:133.5px;font:normal 11px/14px "Liberation Sans", sans-serif;color:#000;'>19.1</span>
<span class="t" style='left:456.0px;top:134.0px;font:normal 11px/14px "Liberation Sans", sans-serif;color:#000;letter-spacing:-0.81px;'>dBm</span>
<span class="t" style='left:29.5px;top:215.7px;font:bold 11px/14px "DejaVu Sans", sans-serif;color:#000;transform:scaleX(0.883);transform-origin:0 50%;'>Upstream</span>
<span class="t" style='left:97.0px;top:215.0px;font:normal 11px/14px "Liberation Sans", sans-serif;color:#000;letter-spacing:-0.13px;'>Bitrate</span>
<span class="t" style='left:134.0px;top:214.5px;font:normal 11px/14px "Liberation Sans", sans-serif;color:#000;'>1148</span>
<span class="t" style='left:171.0px;top:215.0px;font:normal 10.5px/14px "Liberation Sans", sans-serif;color:#000;letter-spacing:-0.20px;'>kbit/s</span>
<span class="t" style='left:205.0px;top:215.0px;font:normal 11px/14px "Liberation Sans", sans-serif;color:#000;letter-spacing:-0.25px;'>Dämpfung</span>
<span class="t" style='left:258.5px;top:214.5px;font:normal 11px/14px "Liberation Sans", sans-serif;color:#000;'>21.4</span>
<span class="t" style='left:286.7px;top:215.0px;font:normal 11px/14px "Liberation Sans", sans-serif;color:#000;letter-spacing:-1.20px;'>dB</span>
<span class="t" style='left:306.0px;top:215.0px;font:normal 11px/14px "Liberation Sans", sans-serif;color:#000;letter-spacing:-1.20px;'>SNRM</span>
<span class="t" style='left:338.5px;top:214.5px;font:normal 11px/14px "Liberation Sans", sans-serif;color:#000;'>11.7</span>
<span class="t" style='left:366.0px;top:215.0px;font:normal 11px/14px "Liberation Sans", sans-serif;color:#000;letter-spacing:-1.17px;'>dB</span>
<span class="t" style='left:386.5px;top:215.0px;font:normal 11px/14px "Liberation Sans", sans-serif;color:#000;letter-spacing:0.17px;'>tx pwr</span>
<span class="t" style='left:424.5px;top:214.5px;font:normal 11px/14px "Liberation Sans", sans-serif;color:#000;'>13.3</span>
<span class="t" style='left:456.0px;top:215.0px;font:normal 11px/14px "Liberation Sans", sans-serif;color:#000;letter-spacing:-0.81px;'>dBm</span>
<span class="t" style='left:37.6px;top:154.7px;font:normal 10px/12px "Liberation Sans", sans-serif;color:#000;transform:scaleX(0.911);transform-origin:0 50%;'>RCO: 102%</span>
<span class="t" style='left:15.8px;top:198.7px;font:normal 10px/12px "Liberation Sans", sans-serif;color:#000;transform:scaleX(0.934);transform-origin:0 50%;'>RCO: 87% (1326kbps)</span>
<span class="t" style='left:10.0px;top:169.2px;font:normal 10px/12px "Liberation Sans", sans-serif;color:#ACA899;transform:scaleX(0.971);transform-origin:0 50%;text-shadow:1px 1px 0 #fff;'>bcm6348 v0.7</span>
<span class="t" style='left:12.7px;top:183.7px;font:normal 10px/12px "Liberation Sans", sans-serif;color:#ACA899;transform:scaleX(0.933);transform-origin:0 50%;text-shadow:1px 1px 0 #fff;'>239.20 bmips</span>
<span class="t" style='left:119.7px;top:180.7px;font:normal 10px/12px "Liberation Sans", sans-serif;color:#000;transform:scaleX(0.879);transform-origin:0 50%;'>Showtime</span>
<span class="t" style='left:170.4px;top:167.4px;font:normal 10px/12px "Liberation Sans", sans-serif;color:#000;transform:scaleX(0.927);transform-origin:0 50%;'>L0 (full-power mode)</span>
<span class="t" style='left:297.8px;top:169.2px;font:normal 10px/12px "Liberation Sans", sans-serif;color:#000;transform:scaleX(0.906);transform-origin:0 50%;'>ADSL2+</span>
<span class="t" style='left:297.8px;top:180.3px;font:normal 10px/12px "Liberation Sans", sans-serif;color:#000;transform:scaleX(0.913);transform-origin:0 50%;'>interleaved path</span>
<span class="t" style='left:448.7px;top:154.4px;font:normal 10px/12px "Liberation Sans", sans-serif;color:#000;transform:scaleX(0.941);transform-origin:0 50%;'>interleaving depth: 64</span>
<span class="t" style='left:448.7px;top:193.7px;font:normal 10px/12px "Liberation Sans", sans-serif;color:#000;transform:scaleX(0.933);transform-origin:0 50%;'>interleaving depth: 8</span>
<span class="t" style='left:31.5px;top:248.0px;font:normal 11px/14px "Liberation Sans", sans-serif;color:#CFCFCF;letter-spacing:-0.72px;-webkit-text-stroke:0.08px;'>Bit Loading Values   bits per tone</span>
<span class="t" style='left:422.6px;top:247.0px;font:normal 10.5px/14px "Liberation Sans", sans-serif;color:#B4B4D8;letter-spacing:-0.37px;-webkit-text-stroke:0.08px;'>http://modemhilfe.de.vu</span>
<span class="t" style='left:31.8px;top:319.8px;font:normal 9.5px/14px "Liberation Sans", sans-serif;color:#CFCFCF;letter-spacing:-0.16px;-webkit-text-stroke:0.08px;'>SNR  dB per tone</span>
<span class="t" style='left:31.8px;top:358.5px;font:normal 9px/14px "Liberation Sans", sans-serif;color:#C8C864;letter-spacing:-0.34px;-webkit-text-stroke:0.08px;'>High  46dB</span>
<span class="t" style='left:31.8px;top:368.7px;font:normal 9px/14px "Liberation Sans", sans-serif;color:#C8C864;letter-spacing:-0.39px;-webkit-text-stroke:0.08px;'>Low   20dB</span>
<span class="t" style='left:440.7px;top:319.5px;font:normal 10.5px/14px "Liberation Sans", sans-serif;color:#B4B4D8;letter-spacing:-0.33px;-webkit-text-stroke:0.08px;'>http://dmt.mhilfe.de</span>
<span class="t" style='left:57.7px;top:391.4px;font:normal 9.5px/14px "Liberation Sans", sans-serif;color:#E88A8A;letter-spacing:-0.37px;-webkit-text-stroke:0.08px;'>31dB@300kHz</span>
<span class="t" style='left:219.6px;top:391.4px;font:normal 9px/14px "Liberation Sans", sans-serif;color:#E88A8A;letter-spacing:-0.21px;-webkit-text-stroke:0.08px;'>50dB@1MHz</span>
<span class="t" style='left:197.9px;top:441.7px;font:normal 10px/12px "Liberation Mono", monospace;color:#8C8C8C;letter-spacing:-0.05px;-webkit-text-stroke:0.08px;'>attenuation (DS)  dB per tone</span>
<span class="t" style='left:434.3px;top:430.6px;font:normal 10px/14px "Liberation Sans", sans-serif;color:#DADADA;letter-spacing:-0.34px;-webkit-text-stroke:0.08px;'>estimated loop length</span>
<span class="t" style='left:441.0px;top:441.0px;font:normal 10px/12px "Liberation Mono", monospace;color:#DADADA;letter-spacing:-0.02px;-webkit-text-stroke:0.08px;'>2000m - 3731m</span>
<span class="t" style='left:40.8px;top:238.2px;font:normal 10px/12px "Liberation Sans", sans-serif;color:#000;transform:scaleX(0.845);transform-origin:0 50%;'>32</span>
<span class="t" style='left:40.8px;top:381.2px;font:normal 10px/12px "Liberation Sans", sans-serif;color:#000;transform:scaleX(0.845);transform-origin:0 50%;'>32</span>
<span class="t" style='left:38.4px;top:309.2px;font:normal 10px/12px "Liberation Sans", sans-serif;color:#000;transform:scaleX(0.857);transform-origin:0 50%;'>138</span>
<span class="t" style='left:38.4px;top:452.7px;font:normal 10px/12px "Liberation Sans", sans-serif;color:#000;transform:scaleX(0.857);transform-origin:0 50%;'>138</span>
<span class="t" style='left:72.8px;top:238.2px;font:normal 10px/12px "Liberation Sans", sans-serif;color:#000;transform:scaleX(0.845);transform-origin:0 50%;'>64</span>
<span class="t" style='left:72.8px;top:381.2px;font:normal 10px/12px "Liberation Sans", sans-serif;color:#000;transform:scaleX(0.845);transform-origin:0 50%;'>64</span>
<span class="t" style='left:70.3px;top:309.2px;font:normal 10px/12px "Liberation Sans", sans-serif;color:#000;transform:scaleX(0.857);transform-origin:0 50%;'>276</span>
<span class="t" style='left:70.3px;top:452.7px;font:normal 10px/12px "Liberation Sans", sans-serif;color:#000;transform:scaleX(0.857);transform-origin:0 50%;'>276</span>
<span class="t" style='left:104.8px;top:238.2px;font:normal 10px/12px "Liberation Sans", sans-serif;color:#000;transform:scaleX(0.845);transform-origin:0 50%;'>96</span>
<span class="t" style='left:104.8px;top:381.2px;font:normal 10px/12px "Liberation Sans", sans-serif;color:#000;transform:scaleX(0.845);transform-origin:0 50%;'>96</span>
<span class="t" style='left:102.3px;top:309.2px;font:normal 10px/12px "Liberation Sans", sans-serif;color:#000;transform:scaleX(0.857);transform-origin:0 50%;'>414</span>
<span class="t" style='left:102.3px;top:452.7px;font:normal 10px/12px "Liberation Sans", sans-serif;color:#000;transform:scaleX(0.857);transform-origin:0 50%;'>414</span>
<span class="t" style='left:134.3px;top:238.2px;font:normal 10px/12px "Liberation Sans", sans-serif;color:#000;transform:scaleX(0.857);transform-origin:0 50%;'>128</span>
<span class="t" style='left:134.3px;top:381.2px;font:normal 10px/12px "Liberation Sans", sans-serif;color:#000;transform:scaleX(0.857);transform-origin:0 50%;'>128</span>
<span class="t" style='left:134.3px;top:309.2px;font:normal 10px/12px "Liberation Sans", sans-serif;color:#000;transform:scaleX(0.857);transform-origin:0 50%;'>552</span>
<span class="t" style='left:134.3px;top:452.7px;font:normal 10px/12px "Liberation Sans", sans-serif;color:#000;transform:scaleX(0.857);transform-origin:0 50%;'>552</span>
<span class="t" style='left:166.3px;top:238.2px;font:normal 10px/12px "Liberation Sans", sans-serif;color:#000;transform:scaleX(0.857);transform-origin:0 50%;'>160</span>
<span class="t" style='left:166.3px;top:381.2px;font:normal 10px/12px "Liberation Sans", sans-serif;color:#000;transform:scaleX(0.857);transform-origin:0 50%;'>160</span>
<span class="t" style='left:166.3px;top:309.2px;font:normal 10px/12px "Liberation Sans", sans-serif;color:#000;transform:scaleX(0.857);transform-origin:0 50%;'>690</span>
<span class="t" style='left:166.3px;top:452.7px;font:normal 10px/12px "Liberation Sans", sans-serif;color:#000;transform:scaleX(0.857);transform-origin:0 50%;'>690</span>
<span class="t" style='left:198.3px;top:238.2px;font:normal 10px/12px "Liberation Sans", sans-serif;color:#000;transform:scaleX(0.857);transform-origin:0 50%;'>192</span>
<span class="t" style='left:198.3px;top:381.2px;font:normal 10px/12px "Liberation Sans", sans-serif;color:#000;transform:scaleX(0.857);transform-origin:0 50%;'>192</span>
<span class="t" style='left:198.3px;top:309.2px;font:normal 10px/12px "Liberation Sans", sans-serif;color:#000;transform:scaleX(0.857);transform-origin:0 50%;'>828</span>
<span class="t" style='left:198.3px;top:452.7px;font:normal 10px/12px "Liberation Sans", sans-serif;color:#000;transform:scaleX(0.857);transform-origin:0 50%;'>828</span>
<span class="t" style='left:230.3px;top:238.2px;font:normal 10px/12px "Liberation Sans", sans-serif;color:#000;transform:scaleX(0.857);transform-origin:0 50%;'>224</span>
<span class="t" style='left:230.3px;top:381.2px;font:normal 10px/12px "Liberation Sans", sans-serif;color:#000;transform:scaleX(0.857);transform-origin:0 50%;'>224</span>
<span class="t" style='left:230.3px;top:309.2px;font:normal 10px/12px "Liberation Sans", sans-serif;color:#000;transform:scaleX(0.857);transform-origin:0 50%;'>966</span>
<span class="t" style='left:230.3px;top:452.7px;font:normal 10px/12px "Liberation Sans", sans-serif;color:#000;transform:scaleX(0.857);transform-origin:0 50%;'>966</span>
<span class="t" style='left:262.4px;top:238.2px;font:normal 10px/12px "Liberation Sans", sans-serif;color:#000;transform:scaleX(0.857);transform-origin:0 50%;'>256</span>
<span class="t" style='left:262.4px;top:381.2px;font:normal 10px/12px "Liberation Sans", sans-serif;color:#000;transform:scaleX(0.857);transform-origin:0 50%;'>256</span>
<span class="t" style='left:259.9px;top:309.2px;font:normal 10px/12px "Liberation Sans", sans-serif;color:#000;transform:scaleX(0.892);transform-origin:0 50%;'>1104</span>
<span class="t" style='left:259.9px;top:452.7px;font:normal 10px/12px "Liberation Sans", sans-serif;color:#000;transform:scaleX(0.892);transform-origin:0 50%;'>1104</span>
<span class="t" style='left:294.4px;top:238.2px;font:normal 10px/12px "Liberation Sans", sans-serif;color:#000;transform:scaleX(0.857);transform-origin:0 50%;'>288</span>
<span class="t" style='left:294.4px;top:381.2px;font:normal 10px/12px "Liberation Sans", sans-serif;color:#000;transform:scaleX(0.857);transform-origin:0 50%;'>288</span>
<span class="t" style='left:291.9px;top:309.2px;font:normal 10px/12px "Liberation Sans", sans-serif;color:#000;transform:scaleX(0.863);transform-origin:0 50%;'>1242</span>
<span class="t" style='left:291.9px;top:452.7px;font:normal 10px/12px "Liberation Sans", sans-serif;color:#000;transform:scaleX(0.863);transform-origin:0 50%;'>1242</span>
<span class="t" style='left:326.4px;top:238.2px;font:normal 10px/12px "Liberation Sans", sans-serif;color:#000;transform:scaleX(0.857);transform-origin:0 50%;'>320</span>
<span class="t" style='left:326.4px;top:381.2px;font:normal 10px/12px "Liberation Sans", sans-serif;color:#000;transform:scaleX(0.857);transform-origin:0 50%;'>320</span>
<span class="t" style='left:323.9px;top:309.2px;font:normal 10px/12px "Liberation Sans", sans-serif;color:#000;transform:scaleX(0.863);transform-origin:0 50%;'>1380</span>
<span class="t" style='left:323.9px;top:452.7px;font:normal 10px/12px "Liberation Sans", sans-serif;color:#000;transform:scaleX(0.863);transform-origin:0 50%;'>1380</span>
<span class="t" style='left:358.4px;top:238.2px;font:normal 10px/12px "Liberation Sans", sans-serif;color:#000;transform:scaleX(0.857);transform-origin:0 50%;'>352</span>
<span class="t" style='left:358.4px;top:381.2px;font:normal 10px/12px "Liberation Sans", sans-serif;color:#000;transform:scaleX(0.857);transform-origin:0 50%;'>352</span>
<span class="t" style='left:355.9px;top:309.2px;font:normal 10px/12px "Liberation Sans", sans-serif;color:#000;transform:scaleX(0.863);transform-origin:0 50%;'>1518</span>
<span class="t" style='left:355.9px;top:452.7px;font:normal 10px/12px "Liberation Sans", sans-serif;color:#000;transform:scaleX(0.863);transform-origin:0 50%;'>1518</span>
<span class="t" style='left:390.4px;top:238.2px;font:normal 10px/12px "Liberation Sans", sans-serif;color:#000;transform:scaleX(0.857);transform-origin:0 50%;'>384</span>
<span class="t" style='left:390.4px;top:381.2px;font:normal 10px/12px "Liberation Sans", sans-serif;color:#000;transform:scaleX(0.857);transform-origin:0 50%;'>384</span>
<span class="t" style='left:387.9px;top:309.2px;font:normal 10px/12px "Liberation Sans", sans-serif;color:#000;transform:scaleX(0.863);transform-origin:0 50%;'>1656</span>
<span class="t" style='left:387.9px;top:452.7px;font:normal 10px/12px "Liberation Sans", sans-serif;color:#000;transform:scaleX(0.863);transform-origin:0 50%;'>1656</span>
<span class="t" style='left:422.4px;top:238.2px;font:normal 10px/12px "Liberation Sans", sans-serif;color:#000;transform:scaleX(0.857);transform-origin:0 50%;'>416</span>
<span class="t" style='left:422.4px;top:381.2px;font:normal 10px/12px "Liberation Sans", sans-serif;color:#000;transform:scaleX(0.857);transform-origin:0 50%;'>416</span>
<span class="t" style='left:419.9px;top:309.2px;font:normal 10px/12px "Liberation Sans", sans-serif;color:#000;transform:scaleX(0.863);transform-origin:0 50%;'>1794</span>
<span class="t" style='left:419.9px;top:452.7px;font:normal 10px/12px "Liberation Sans", sans-serif;color:#000;transform:scaleX(0.863);transform-origin:0 50%;'>1794</span>
<span class="t" style='left:454.4px;top:238.2px;font:normal 10px/12px "Liberation Sans", sans-serif;color:#000;transform:scaleX(0.857);transform-origin:0 50%;'>448</span>
<span class="t" style='left:454.4px;top:381.2px;font:normal 10px/12px "Liberation Sans", sans-serif;color:#000;transform:scaleX(0.857);transform-origin:0 50%;'>448</span>
<span class="t" style='left:451.9px;top:309.2px;font:normal 10px/12px "Liberation Sans", sans-serif;color:#000;transform:scaleX(0.863);transform-origin:0 50%;'>1932</span>
<span class="t" style='left:451.9px;top:452.7px;font:normal 10px/12px "Liberation Sans", sans-serif;color:#000;transform:scaleX(0.863);transform-origin:0 50%;'>1932</span>
<span class="t" style='left:486.4px;top:238.2px;font:normal 10px/12px "Liberation Sans", sans-serif;color:#000;transform:scaleX(0.857);transform-origin:0 50%;'>480</span>
<span class="t" style='left:486.4px;top:381.2px;font:normal 10px/12px "Liberation Sans", sans-serif;color:#000;transform:scaleX(0.857);transform-origin:0 50%;'>480</span>
<span class="t" style='left:483.9px;top:309.2px;font:normal 10px/12px "Liberation Sans", sans-serif;color:#000;transform:scaleX(0.863);transform-origin:0 50%;'>2070</span>
<span class="t" style='left:483.9px;top:452.7px;font:normal 10px/12px "Liberation Sans", sans-serif;color:#000;transform:scaleX(0.863);transform-origin:0 50%;'>2070</span>
<span class="t" style='left:507.0px;top:238.2px;font:normal 10px/12px "Liberation Sans", sans-serif;color:#000;transform:scaleX(0.968);transform-origin:0 50%;'>Tone</span>
<span class="t" style='left:507.0px;top:381.2px;font:normal 10px/12px "Liberation Sans", sans-serif;color:#000;transform:scaleX(0.968);transform-origin:0 50%;'>Tone</span>
<span class="t" style='left:509.5px;top:309.2px;font:normal 10px/12px "Liberation Sans", sans-serif;color:#000;transform:scaleX(0.928);transform-origin:0 50%;'>kHz</span>
<span class="t" style='left:509.5px;top:452.7px;font:normal 10px/12px "Liberation Sans", sans-serif;color:#000;transform:scaleX(0.928);transform-origin:0 50%;'>kHz</span>
<span class="t" style='left:17.6px;top:247.7px;font:normal 10px/12px "Liberation Sans", sans-serif;color:#000;transform:scaleX(0.845);transform-origin:0 50%;'>14</span>
<span class="t" style='left:528.0px;top:247.7px;font:normal 10px/12px "Liberation Sans", sans-serif;color:#000;transform:scaleX(0.845);transform-origin:0 50%;'>14</span>
<span class="t" style='left:17.6px;top:259.7px;font:normal 10px/12px "Liberation Sans", sans-serif;color:#000;transform:scaleX(0.905);transform-origin:0 50%;'>11</span>
<span class="t" style='left:528.0px;top:259.7px;font:normal 10px/12px "Liberation Sans", sans-serif;color:#000;transform:scaleX(0.905);transform-origin:0 50%;'>11</span>
<span class="t" style='left:22.5px;top:271.7px;font:normal 10px/12px "Liberation Sans", sans-serif;color:#000;transform:scaleX(0.809);transform-origin:0 50%;'>8</span>
<span class="t" style='left:528.0px;top:271.7px;font:normal 10px/12px "Liberation Sans", sans-serif;color:#000;transform:scaleX(0.809);transform-origin:0 50%;'>8</span>
<span class="t" style='left:22.5px;top:283.2px;font:normal 10px/12px "Liberation Sans", sans-serif;color:#000;transform:scaleX(0.809);transform-origin:0 50%;'>5</span>
<span class="t" style='left:528.0px;top:283.2px;font:normal 10px/12px "Liberation Sans", sans-serif;color:#000;transform:scaleX(0.809);transform-origin:0 50%;'>5</span>
<span class="t" style='left:22.5px;top:295.7px;font:normal 10px/12px "Liberation Sans", sans-serif;color:#000;transform:scaleX(0.809);transform-origin:0 50%;'>2</span>
<span class="t" style='left:528.0px;top:295.7px;font:normal 10px/12px "Liberation Sans", sans-serif;color:#000;transform:scaleX(0.809);transform-origin:0 50%;'>2</span>
<span class="t" style='left:17.6px;top:325.2px;font:normal 10px/12px "Liberation Sans", sans-serif;color:#000;transform:scaleX(0.845);transform-origin:0 50%;'>50</span>
<span class="t" style='left:528.0px;top:325.2px;font:normal 10px/12px "Liberation Sans", sans-serif;color:#000;transform:scaleX(0.845);transform-origin:0 50%;'>50</span>
<span class="t" style='left:17.6px;top:335.4px;font:normal 10px/12px "Liberation Sans", sans-serif;color:#000;transform:scaleX(0.845);transform-origin:0 50%;'>40</span>
<span class="t" style='left:528.0px;top:335.4px;font:normal 10px/12px "Liberation Sans", sans-serif;color:#000;transform:scaleX(0.845);transform-origin:0 50%;'>40</span>
<span class="t" style='left:17.6px;top:345.4px;font:normal 10px/12px "Liberation Sans", sans-serif;color:#000;transform:scaleX(0.845);transform-origin:0 50%;'>30</span>
<span class="t" style='left:528.0px;top:345.4px;font:normal 10px/12px "Liberation Sans", sans-serif;color:#000;transform:scaleX(0.845);transform-origin:0 50%;'>30</span>
<span class="t" style='left:17.6px;top:355.5px;font:normal 10px/12px "Liberation Sans", sans-serif;color:#000;transform:scaleX(0.845);transform-origin:0 50%;'>20</span>
<span class="t" style='left:528.0px;top:355.5px;font:normal 10px/12px "Liberation Sans", sans-serif;color:#000;transform:scaleX(0.845);transform-origin:0 50%;'>20</span>
<span class="t" style='left:17.6px;top:365.7px;font:normal 10px/12px "Liberation Sans", sans-serif;color:#000;transform:scaleX(0.845);transform-origin:0 50%;'>10</span>
<span class="t" style='left:528.0px;top:365.7px;font:normal 10px/12px "Liberation Sans", sans-serif;color:#000;transform:scaleX(0.845);transform-origin:0 50%;'>10</span>
<span class="t" style='left:12.7px;top:396.7px;font:normal 10px/12px "Liberation Sans", sans-serif;color:#000;transform:scaleX(0.857);transform-origin:0 50%;'>100</span>
<span class="t" style='left:528.0px;top:396.7px;font:normal 10px/12px "Liberation Sans", sans-serif;color:#000;transform:scaleX(0.857);transform-origin:0 50%;'>100</span>
<span class="t" style='left:17.6px;top:407.2px;font:normal 10px/12px "Liberation Sans", sans-serif;color:#000;transform:scaleX(0.845);transform-origin:0 50%;'>80</span>
<span class="t" style='left:528.0px;top:407.2px;font:normal 10px/12px "Liberation Sans", sans-serif;color:#000;transform:scaleX(0.845);transform-origin:0 50%;'>80</span>
<span class="t" style='left:17.6px;top:417.2px;font:normal 10px/12px "Liberation Sans", sans-serif;color:#000;transform:scaleX(0.845);transform-origin:0 50%;'>60</span>
<span class="t" style='left:528.0px;top:417.2px;font:normal 10px/12px "Liberation Sans", sans-serif;color:#000;transform:scaleX(0.845);transform-origin:0 50%;'>60</span>
<span class="t" style='left:17.6px;top:427.2px;font:normal 10px/12px "Liberation Sans", sans-serif;color:#000;transform:scaleX(0.845);transform-origin:0 50%;'>40</span>
<span class="t" style='left:528.0px;top:427.2px;font:normal 10px/12px "Liberation Sans", sans-serif;color:#000;transform:scaleX(0.845);transform-origin:0 50%;'>40</span>
<span class="t" style='left:17.6px;top:437.2px;font:normal 10px/12px "Liberation Sans", sans-serif;color:#000;transform:scaleX(0.845);transform-origin:0 50%;'>20</span>
<span class="t" style='left:528.0px;top:437.2px;font:normal 10px/12px "Liberation Sans", sans-serif;color:#000;transform:scaleX(0.845);transform-origin:0 50%;'>20</span>
<span class="t" style='left:41.5px;top:471.0px;font:normal 9px/12px "Liberation Sans", sans-serif;color:#000;letter-spacing:-0.11px;'>Reload</span>
<span class="t" style='left:116.7px;top:471.0px;font:normal 11px/14px "Liberation Sans", sans-serif;color:#ACA899;letter-spacing:-0.05px;'>extQuery</span>
<span class="t" style='left:184.4px;top:471.0px;font:normal 11px/14px "Liberation Sans", sans-serif;color:#ACA899;letter-spacing:0.30px;'>snrft</span>
<span class="t" style='left:233.7px;top:471.0px;font:normal 11px/14px "Liberation Sans", sans-serif;color:#ACA899;letter-spacing:0.12px;'>bitswap</span>
<span class="t" style='left:284.8px;top:471.0px;font:normal 11px/14px "Liberation Sans", sans-serif;color:#000;letter-spacing:-0.34px;'>SNR-Monitor Interval:</span>
<span class="t" style='left:389.5px;top:471.5px;font:normal 9.5px/12px "Liberation Sans", sans-serif;color:#000;'>8</span>
<span class="t" style='left:407.5px;top:472.7px;font:normal 10px/12px "Liberation Sans", sans-serif;color:#000;transform:scaleX(0.867);transform-origin:0 50%;'>sec</span>
<span class="t" style='left:441.0px;top:471.0px;font:normal 9.5px/12px "Liberation Sans", sans-serif;color:#000;letter-spacing:-0.02px;'>Start</span>
<span class="t" style='left:493.5px;top:471.0px;font:normal 9px/12px "Liberation Sans", sans-serif;color:#ACA899;letter-spacing:-0.17px;'>Stop</span>
<span class="t" style='left:8.4px;top:495.0px;font:normal 10px/12px "Liberation Sans", sans-serif;color:#000;transform:scaleX(0.939);transform-origin:0 50%;'>Information</span>
<span class="t" style='left:10.7px;top:510.1px;font:normal 10px/12px "Liberation Sans", sans-serif;color:#000;transform:scaleX(0.916);transform-origin:0 50%;'>Firmware Version: 3.28p</span>
<span class="t" style='left:10.7px;top:522.1px;font:normal 10px/12px "Liberation Sans", sans-serif;color:#000;transform:scaleX(0.932);transform-origin:0 50%;'>ADSL Driver Version: B2pB021.d17m</span>
<span class="t" style='left:10.7px;top:533.6px;font:normal 10px/12px "Liberation Sans", sans-serif;color:#000;transform:scaleX(0.946);transform-origin:0 50%;'>Wireless Driver Version: 3.91.41.0</span>
<span class="t" style='left:10.7px;top:545.3px;font:normal 10px/12px "Liberation Sans", sans-serif;color:#000;transform:scaleX(0.947);transform-origin:0 50%;'>System Type: RTA1025BW_16</span>
<span class="t" style='left:254.6px;top:498.0px;font:normal 12.5px/16px "Liberation Sans", sans-serif;color:#0046D5;transform:scaleX(0.860);transform-origin:0 50%;'>automatische DSL Überwachung</span>
<span class="t" style='left:277.0px;top:518.5px;font:normal 11px/14px "Liberation Sans", sans-serif;color:#000;letter-spacing:-0.14px;'>Aktivieren</span>
<span class="t" style='left:366.0px;top:518.5px;font:normal 11px/14px "Liberation Sans", sans-serif;color:#ACA899;letter-spacing:-0.01px;'>Deaktivieren</span>
<span class="t" style='left:461.0px;top:518.5px;font:normal 11px/14px "Liberation Sans", sans-serif;color:#000;letter-spacing:-0.15px;'>Konfiguration</span>
<span class="t" style='left:285.0px;top:539.0px;font:normal 11px/14px "Liberation Sans", sans-serif;color:#000;letter-spacing:-0.11px;'>DSL Überwachung bei Programmstart aktivieren</span>
<span class="t" style='left:39.5px;top:574.5px;font:normal 11px/14px "Liberation Sans", sans-serif;color:#000;letter-spacing:-0.17px;'>Aktualisieren</span>
<span class="t" style='left:154.0px;top:586.9px;font:normal 10px/12px "Liberation Sans", sans-serif;color:#000;transform:scaleX(0.976);transform-origin:0 50%;'>http://dmt.mhilfe.de</span>
<span class="t" style='left:299.4px;top:586.9px;font:normal 10px/12px "Liberation Sans", sans-serif;color:#000;transform:scaleX(0.970);transform-origin:0 50%;'>http://modemhilfe.de.vu</span>
<span class="t" style='left:444.3px;top:586.9px;font:normal 10px/12px "Liberation Sans", sans-serif;color:#000;transform:scaleX(0.979);transform-origin:0 50%;'>http://forum.mhilfe.de</span>
<span class="t" style='left:594.0px;top:574.5px;font:normal 11px/14px "Liberation Sans", sans-serif;color:#000;letter-spacing:-0.18px;'>DSL Resync.</span>
<span class="t" style='left:717.0px;top:574.5px;font:normal 11px/14px "Liberation Sans", sans-serif;color:#ACA899;letter-spacing:0.07px;'>Reboot/Resync</span>
<span class="t" style='left:402.4px;top:608.0px;font:normal 11px/14px "Liberation Sans", sans-serif;color:#000;letter-spacing:-0.12px;'>Fertig</span>
<span class="t" style='left:795.5px;top:608.0px;font:normal 11px/14px "Liberation Sans", sans-serif;color:#000;letter-spacing:0.27px;'>v8.07</span>
<span class="t" style='left:608.5px;top:6.5px;font:normal 11px/14px "Liberation Sans", sans-serif;color:#000;letter-spacing:-0.19px;'>Info2</span>
<span class="t" style='left:650.4px;top:6.5px;font:normal 11px/14px "Liberation Sans", sans-serif;color:#000;letter-spacing:-0.12px;'>Info3</span>
<span class="t" style='left:692.3px;top:6.5px;font:normal 10.5px/14px "Liberation Sans", sans-serif;color:#000;letter-spacing:-0.27px;'>CLI</span>
<span class="t" style='left:566.0px;top:5.0px;font:normal 11px/14px "Liberation Sans", sans-serif;color:#000;letter-spacing:-0.29px;'>Info1</span>
<span class="t" style='left:566.0px;top:26.4px;font:normal 10px/12px "Liberation Sans", sans-serif;color:#000;transform:scaleX(0.950);transform-origin:0 50%;'>Statistics</span>
<span class="t" style='left:566.3px;top:396.7px;font:normal 10px/12px "Liberation Sans", sans-serif;color:#000;transform:scaleX(0.948);transform-origin:0 50%;'>Error Statistic (last 60 minutes/15min.intervals)</span>
<span class="t" style='left:566.3px;top:490.3px;font:normal 10px/12px "Liberation Sans", sans-serif;color:#000;transform:scaleX(0.878);transform-origin:0 50%;'>Gaps</span>
<span class="t" style='left:567.8px;top:504.0px;font:normal 10px/12px "Liberation Mono", monospace;color:#000;-webkit-text-stroke:0.15px;'>no gaps found</span>
<span class="t" style='left:594.7px;top:406.6px;font:normal 9.5px/12px "Liberation Sans", sans-serif;color:#CC99D0;letter-spacing:-0.65px;-webkit-text-stroke:0.08px;'>CRC</span>
<span class="t" style='left:624.9px;top:406.6px;font:normal 9.5px/12px "Liberation Sans", sans-serif;color:#CCCC66;letter-spacing:-1.20px;-webkit-text-stroke:0.08px;'>ES</span>
<span class="t" style='left:647.3px;top:406.6px;font:normal 9.5px/12px "Liberation Sans", sans-serif;color:#FF9420;letter-spacing:-0.94px;-webkit-text-stroke:0.08px;'>LOF</span>
<span class="t" style='left:675.2px;top:406.6px;font:normal 9.5px/12px "Liberation Sans", sans-serif;color:#FF5050;letter-spacing:-1.11px;-webkit-text-stroke:0.08px;'>LOS</span>
<span class="t" style='left:704.6px;top:406.6px;font:normal 9.5px/12px "Liberation Sans", sans-serif;color:#ABABAB;letter-spacing:-0.09px;-webkit-text-stroke:0.08px;'>currCRC</span>
<span class="t" style='left:568.4px;top:412.0px;font:normal 10px/12px "Liberation Mono", monospace;color:#EDEDED;letter-spacing:-0.11px;-webkit-text-stroke:0.08px;'>240</span>
<span class="t" style='left:741.6px;top:412.0px;font:normal 10px/12px "Liberation Mono", monospace;color:#EDEDED;letter-spacing:0.19px;-webkit-text-stroke:0.08px;'>240</span>
<span class="t" style='left:568.4px;top:422.0px;font:normal 10px/12px "Liberation Mono", monospace;color:#EDEDED;letter-spacing:-0.11px;-webkit-text-stroke:0.08px;'>200</span>
<span class="t" style='left:741.6px;top:422.0px;font:normal 10px/12px "Liberation Mono", monospace;color:#EDEDED;letter-spacing:0.19px;-webkit-text-stroke:0.08px;'>200</span>
<span class="t" style='left:568.4px;top:432.0px;font:normal 10px/12px "Liberation Mono", monospace;color:#EDEDED;letter-spacing:-0.11px;-webkit-text-stroke:0.08px;'>160</span>
<span class="t" style='left:741.6px;top:432.0px;font:normal 10px/12px "Liberation Mono", monospace;color:#EDEDED;letter-spacing:0.19px;-webkit-text-stroke:0.08px;'>160</span>
<span class="t" style='left:568.4px;top:442.0px;font:normal 10px/12px "Liberation Mono", monospace;color:#EDEDED;letter-spacing:-0.11px;-webkit-text-stroke:0.08px;'>120</span>
<span class="t" style='left:741.6px;top:442.0px;font:normal 10px/12px "Liberation Mono", monospace;color:#EDEDED;letter-spacing:0.19px;-webkit-text-stroke:0.08px;'>120</span>
<span class="t" style='left:574.4px;top:452.0px;font:normal 10px/12px "Liberation Mono", monospace;color:#EDEDED;letter-spacing:-0.22px;-webkit-text-stroke:0.08px;'>80</span>
<span class="t" style='left:741.6px;top:452.0px;font:normal 10px/12px "Liberation Mono", monospace;color:#EDEDED;letter-spacing:0.18px;-webkit-text-stroke:0.08px;'>80</span>
<span class="t" style='left:574.4px;top:462.0px;font:normal 10px/12px "Liberation Mono", monospace;color:#EDEDED;letter-spacing:-0.22px;-webkit-text-stroke:0.08px;'>40</span>
<span class="t" style='left:741.6px;top:462.0px;font:normal 10px/12px "Liberation Mono", monospace;color:#EDEDED;letter-spacing:0.18px;-webkit-text-stroke:0.08px;'>40</span>
<span class="t" style='left:580.2px;top:472.0px;font:normal 10px/12px "Liberation Mono", monospace;color:#EDEDED;-webkit-text-stroke:0.08px;'>0</span>
<span class="t" style='left:741.6px;top:472.0px;font:normal 10px/12px "Liberation Mono", monospace;color:#EDEDED;-webkit-text-stroke:0.08px;'>0</span>
<span class="t" style='left:586.1px;top:477.5px;font:normal 10px/12px "Liberation Mono", monospace;color:#EDEDED;letter-spacing:0.49px;-webkit-text-stroke:0.08px;'>-60</span>
<span class="t" style='left:615.9px;top:477.5px;font:normal 10px/12px "Liberation Mono", monospace;color:#EDEDED;letter-spacing:0.49px;-webkit-text-stroke:0.08px;'>-45</span>
<span class="t" style='left:646.0px;top:477.5px;font:normal 10px/12px "Liberation Mono", monospace;color:#EDEDED;letter-spacing:0.49px;-webkit-text-stroke:0.08px;'>-30</span>
<span class="t" style='left:676.1px;top:477.5px;font:normal 10px/12px "Liberation Mono", monospace;color:#EDEDED;letter-spacing:0.49px;-webkit-text-stroke:0.08px;'>-15</span>
<span class="t" style='left:705.5px;top:477.5px;font:normal 10px/12px "Liberation Mono", monospace;color:#EDEDED;-webkit-text-stroke:0.08px;'>0</span>
<span class="t" style='left:718.0px;top:477.5px;font:normal 10px/12px "Liberation Sans", sans-serif;color:#EDEDED;letter-spacing:-0.58px;-webkit-text-stroke:0.08px;'>curr</span>
<span class="t" style='left:801.0px;top:410.0px;font:normal 10px/12px "Liberation Mono", monospace;color:#000;-webkit-text-stroke:0.12px;'>x64</span>
<span class="t" style='left:801.0px;top:418.0px;font:normal 10px/12px "Liberation Mono", monospace;color:#000;-webkit-text-stroke:0.12px;'>x32</span>
<span class="t" style='left:801.0px;top:426.0px;font:normal 10px/12px "Liberation Mono", monospace;color:#000;-webkit-text-stroke:0.12px;'>x16</span>
<span class="t" style='left:801.0px;top:434.0px;font:normal 10px/12px "Liberation Mono", monospace;color:#000;-webkit-text-stroke:0.12px;'>x 8</span>
<span class="t" style='left:801.0px;top:442.0px;font:normal 10px/12px "Liberation Mono", monospace;color:#000;-webkit-text-stroke:0.12px;'>x 4</span>
<span class="t" style='left:801.0px;top:450.0px;font:normal 10px/12px "Liberation Mono", monospace;color:#000;-webkit-text-stroke:0.12px;'>x 2</span>
<span class="t" style='left:801.0px;top:458.0px;font:normal 10px/12px "Liberation Mono", monospace;color:#000;-webkit-text-stroke:0.12px;'>x 1</span>
<span class="t" style='left:765.0px;top:476.2px;font:normal 10px/12px "Liberation Sans", sans-serif;color:#000;transform:scaleX(0.967);transform-origin:0 50%;'>scaling factor</span>
</div>
</div>
</body>
</html>
